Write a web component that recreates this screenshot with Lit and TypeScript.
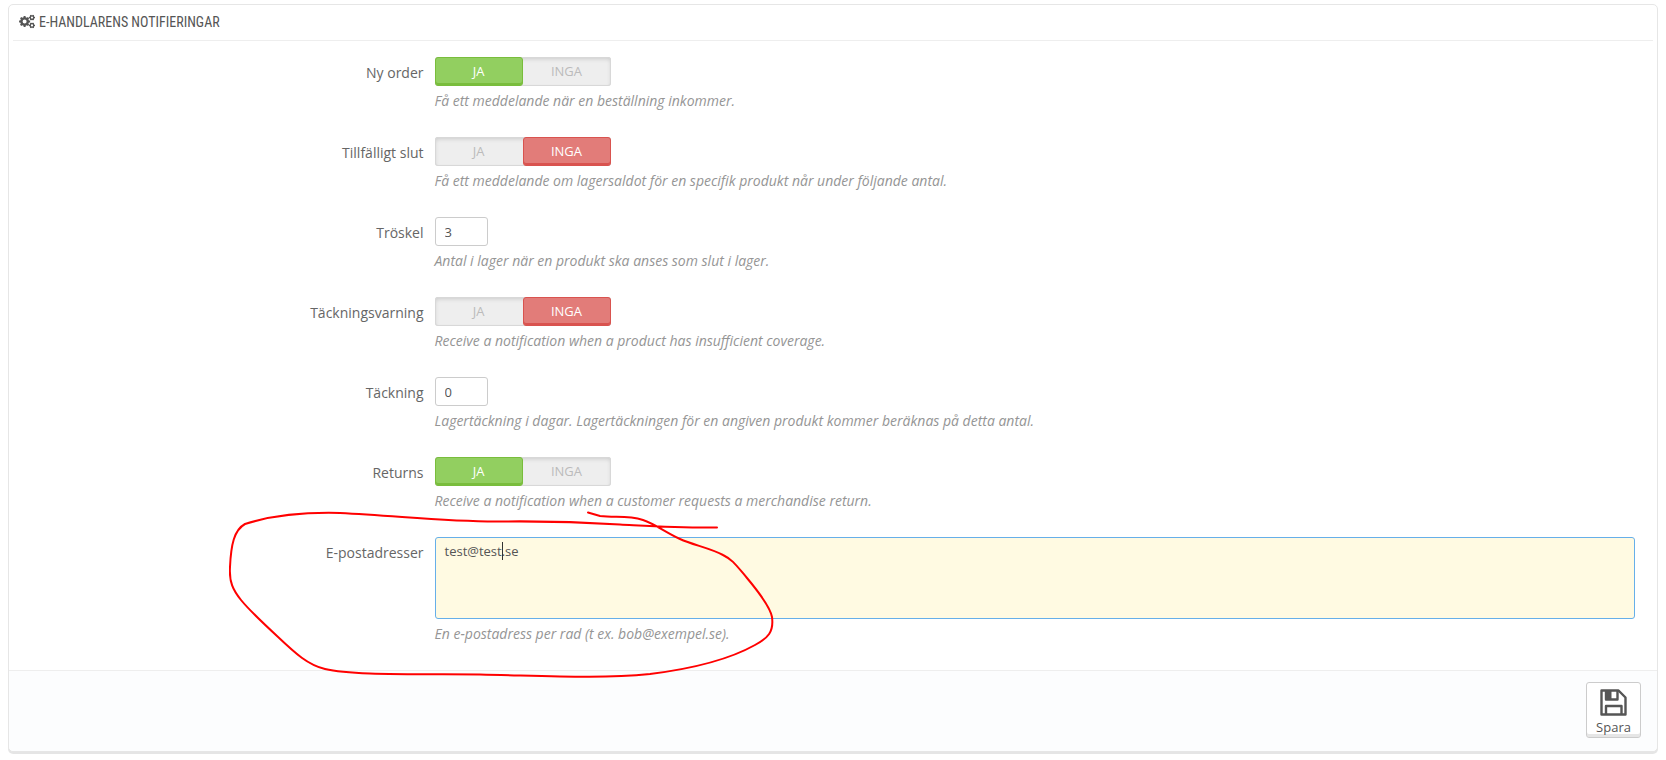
import { LitElement, html, css, svg, nothing } from "lit";
import { customElement, property } from "lit/decorators.js";

/** Two-state JA / INGA switch built from a pair of radio buttons. */
@customElement("yes-no-switch")
export class YesNoSwitch extends LitElement {
  @property() name = "";
  @property() label = "";
  @property({ type: Boolean }) on = false;

  static styles = css`
    :host { display: block; }
    .switch {
      display: grid;
      grid-template-columns: 1fr 1fr;
      box-sizing: border-box;
      width: 176px;
      height: 29px;
      margin: 0;
      padding: 0;
      border: 0;
      border-radius: 3px;
      background: #eee;
      box-shadow: inset 0 0 0 1px #d8d8d8, inset 0 2px 4px rgba(0, 0, 0, 0.15);
    }
    .radio {
      position: absolute;
      opacity: 0;
      pointer-events: none;
    }
    .option {
      box-sizing: border-box;
      height: 29px;
      border: 1px solid transparent;
      border-radius: 3px;
      font-size: 13px;
      line-height: 26px;
      text-align: center;
      color: #bbb;
      cursor: pointer;
    }
    .radio:checked + .option { color: #fff; }
    .radio:checked + .yes {
      background: #92cf60;
      border-color: #79bd3c;
      box-shadow: inset 0 -2px 0 #79bd3c;
    }
    .radio:checked + .no {
      background: #e27c79;
      border-color: #d9534f;
      box-shadow: inset 0 -2px 0 #d9534f;
    }
  `;

  private pick(on: boolean) {
    this.on = on;
  }

  render() {
    return html`
      <fieldset class="switch" aria-label=${this.label}>
        <input class="radio" type="radio" id="yes" name=${this.name} .checked=${this.on} @change=${() => this.pick(true)} />
        <label class="option yes" for="yes">JA</label>
        <input class="radio" type="radio" id="no" name=${this.name} .checked=${!this.on} @change=${() => this.pick(false)} />
        <label class="option no" for="no">INGA</label>
      </fieldset>
    `;
  }
}

type Field = {
  id: string;
  label: string;
  help: string;
  kind: "switch" | "number" | "area";
  value: string | boolean;
};

const FIELDS: Field[] = [
  { id: "new-order", label: "Ny order", kind: "switch", value: true, help: "Få ett meddelande när en beställning inkommer." },
  { id: "out-of-stock", label: "Tillfälligt slut", kind: "switch", value: false, help: "Få ett meddelande om lagersaldot för en specifik produkt når under följande antal." },
  { id: "threshold", label: "Tröskel", kind: "number", value: "3", help: "Antal i lager när en produkt ska anses som slut i lager." },
  { id: "coverage-warning", label: "Täckningsvarning", kind: "switch", value: false, help: "Receive a notification when a product has insufficient coverage." },
  { id: "coverage", label: "Täckning", kind: "number", value: "0", help: "Lagertäckning i dagar. Lagertäckningen för en angiven produkt kommer beräknas på detta antal." },
  { id: "returns", label: "Returns", kind: "switch", value: true, help: "Receive a notification when a customer requests a merchandise return." },
  { id: "emails", label: "E-postadresser", kind: "area", value: "test@test.se", help: "En e-postadress per rad (t ex. bob@exempel.se)." },
];

/** Gear outline: a toothed ring with a round hole, centred on (cx, cy). */
function gear(cx: number, cy: number, r: number, teeth: number, hole: number) {
  const pts: string[] = [];
  const step = (Math.PI * 2) / teeth;
  for (let i = 0; i < teeth; i++) {
    const a = i * step;
    for (const [off, k] of [[-0.3, 0.8], [-0.22, 1], [0.22, 1], [0.3, 0.8]]) {
      const t = a + off * step;
      pts.push(`${(cx + Math.cos(t) * r * k).toFixed(2)} ${(cy + Math.sin(t) * r * k).toFixed(2)}`);
    }
  }
  const ring = `M${cx - hole} ${cy}a${hole} ${hole} 0 1 0 ${hole * 2} 0a${hole} ${hole} 0 1 0 ${-hole * 2} 0Z`;
  return svg`<path fill-rule="evenodd" d=${`M${pts.join("L")}Z${ring}`} />`;
}

@customElement("app-root")
export class AppRoot extends LitElement {
  static styles = css`
    :host {
      display: block;
      padding: 4px 8px;
      background: #fff;
      color: #666;
      font-family: "Open Sans", "Noto Sans", sans-serif;
      font-size: 13px;
    }
    .panel {
      position: relative;
      border: 1px solid #e6e6e6;
      border-radius: 5px;
      background: #fff;
      box-shadow: 0 2px 0 rgba(0, 0, 0, 0.1);
    }
    .heading {
      display: flex;
      align-items: center;
      gap: 4px;
      box-sizing: border-box;
      height: 36px;
      margin: 0 4px 16px;
      padding: 0 6px 2px;
      border-bottom: 1px solid #eee;
      font-family: "Roboto Condensed", "Liberation Sans Narrow", "Open Sans Condensed", sans-serif;
      font-size: 14px;
      font-weight: 400;
      line-height: 16px;
      text-transform: uppercase;
      color: #555;
    }
    .cogs { width: 16px; height: 15px; fill: #555; }
    .fields { padding: 0 17px 27px; }
    .row {
      display: grid;
      grid-template-columns: 1fr 3fr;
      min-height: 80px;
    }
    .name {
      padding: 6px 6px 0 0;
      font-size: 14px;
      line-height: 20px;
      text-align: right;
    }
    .control { padding: 0 5px; }
    .number, .area {
      box-sizing: border-box;
      display: block;
      margin: 0;
      border: 1px solid #ccc;
      border-radius: 3px;
      padding: 5px 9px;
      font: inherit;
      line-height: 17px;
      color: #555;
      background: #fff;
    }
    .number { width: 53px; height: 29px; }
    .entry { position: relative; }
    .area {
      width: 100%;
      height: 82px;
      resize: none;
      border-color: #66afe9;
      background: #fffae2;
      outline: 0;
    }
    .caret {
      position: absolute;
      left: 67px;
      top: 5px;
      width: 1px;
      height: 18px;
      background: #333;
    }
    .help {
      margin: 6px 0 0;
      font-size: 14px;
      line-height: 18px;
      font-style: italic;
      color: #959595;
    }
    .footer {
      display: flex;
      justify-content: flex-end;
      padding: 11px 16px 13px;
      border-top: 1px solid #eee;
      border-radius: 0 0 5px 5px;
      background: #fcfdfe;
    }
    .save {
      display: flex;
      flex-direction: column;
      align-items: center;
      box-sizing: border-box;
      width: 55px;
      height: 56px;
      padding: 6px 0 0;
      border: 1px solid #ccc;
      border-radius: 3px;
      background: #fff;
      box-shadow: inset 0 -3px 0 #e6e6e6;
      font: inherit;
      line-height: 18px;
      color: #555;
    }
    .disk { display: block; width: 27px; height: 27px; margin-bottom: 2px; }
    .scribble {
      position: absolute;
      left: 220px;
      top: 505px;
      width: 545px;
      height: 170px;
      pointer-events: none;
    }
  `;

  private control(f: Field) {
    if (f.kind === "switch") {
      return html`<yes-no-switch .name=${f.id} .label=${f.label} .on=${f.value as boolean}></yes-no-switch>`;
    }
    if (f.kind === "number") {
      return html`<input class="number" type="text" inputmode="numeric" id=${f.id} .value=${f.value as string} />`;
    }
    return html`
      <div class="entry">
        <textarea class="area" id=${f.id} spellcheck="false" .value=${f.value as string}></textarea>
        <span class="caret"></span>
      </div>
    `;
  }

  render() {
    return html`
      <form class="panel" @submit=${(e: Event) => e.preventDefault()}>
        <h3 class="heading">
          <svg class="cogs" viewBox="0 0 16 14" aria-hidden="true">
            ${gear(5.6, 7, 5.6, 8, 2)}
            ${gear(13, 3.1, 3.1, 6, 1.1)}
            ${gear(13, 10.9, 3.1, 6, 1.1)}
          </svg>
          E-handlarens notifieringar
        </h3>
        <div class="fields">
          ${FIELDS.map(
            (f) => html`
              <div class="row">
                ${f.kind === "switch"
                  ? html`<span class="name">${f.label}</span>`
                  : html`<label class="name" for=${f.id}>${f.label}</label>`}
                <div class="control">
                  ${this.control(f)}
                  ${f.help ? html`<p class="help">${f.help}</p>` : nothing}
                </div>
              </div>
            `
          )}
        </div>
        <div class="footer">
          <button class="save" type="submit">
            <svg class="disk" viewBox="0 0 27 27" fill="none" stroke="#555" stroke-width="2.4" stroke-linejoin="round" aria-hidden="true">
              <path d="M1.500 1.500H18.500L25.500 8.500V25.500H1.500Z" />
              <path d="M6 25.500V17H21.500V25.500" />
              <path d="M6 1.500V10.500H17.500V1.500" />
              <path d="M6 1.500H11.500V10.500H6Z" fill="#555" stroke="none" />
            </svg>
            Spara
          </button>
        </div>
        <svg class="scribble" viewBox="229 510 545 170" fill="none" stroke="#f00" stroke-width="2" stroke-linecap="round" aria-hidden="true">
          <path d="M717 527.500C680 528 650 526 620 524.500C580 522 540 521 500 521.500C450 522 400 516 340 513C300 512 270 516 245 524C234 530 231 545 230 567C229 582 233 590 241 600C250 611 264 624 277 636C296 654 308 665 325 669C350 675 400 674 480 674.500C550 676 600 679 650 674C690 669 730 659 755 645C768 638 774 632 772 617C770 606 757 590 747 578C736 565 733 560 723 555C710 548 693 545 680 539C665 532 655 524 643 520C627 515 615 518 600 516L588 512.500" />
        </svg>
      </form>
    `;
  }
}
